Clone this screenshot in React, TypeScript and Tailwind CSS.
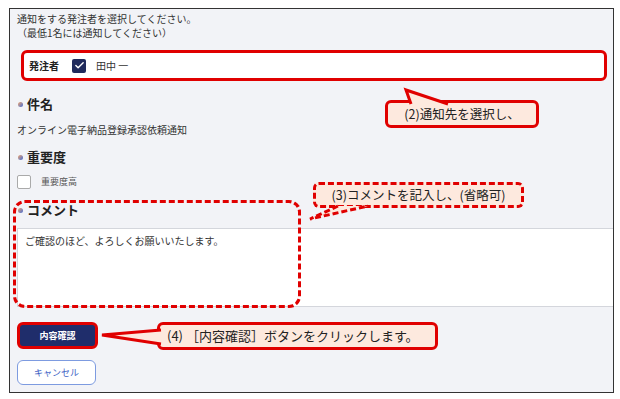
import { Check } from 'lucide-react';

const jp = { fontFamily: '"Noto Sans CJK JP", "Noto Sans", sans-serif' };

function Heading({ label }: { label: string }) {
  return (
    <div className="flex items-center gap-[4px] h-[18px]">
      <span className="ml-[1px] w-[5px] h-[5px] rounded-full bg-gradient-to-br from-[#f0a060] to-[#3f64d0]" />
      <span className="text-[13px] font-bold text-[#222] leading-[18px]">{label}</span>
    </div>
  );
}

export default function App() {
  return (
    <div className="relative w-[620px] h-[399px] bg-white overflow-hidden" style={jp}>
      <div className="ml-[9px] mt-[8px] w-[605px] h-[385px] border border-[#333] bg-[#f2f3f7] flex flex-col pl-[7px] text-[#333]">
        <div className="pt-[3px] text-[10px] leading-[14px]">
          <p>通知をする発注者を選択してください。</p>
          <p>（最低1名には通知してください）</p>
        </div>

        <div className="mt-[10px] ml-[4px] w-[586px] h-[31px] rounded-md border-[3px] border-[#e00000] bg-white flex items-center pl-[5px]">
          <span className="text-[10px] font-bold text-[#222]">発注者</span>
          <span className="ml-[13px] w-[14px] h-[14px] rounded-[2px] bg-[#1f2a5c] flex items-center justify-center">
            <Check className="w-[11px] h-[11px] text-white" strokeWidth={3} />
          </span>
          <span className="ml-[10px] text-[10px] text-[#333]">田中 一</span>
        </div>

        <div className="mt-[14px]">
          <Heading label="件名" />
        </div>
        <p className="mt-[10px] text-[10px] leading-[14px]">オンライン電子納品登録承認依頼通知</p>

        <div className="mt-[11px]">
          <Heading label="重要度" />
        </div>
        <div className="mt-[9px] flex items-center h-[14px]">
          <span className="w-[14px] h-[14px] rounded-[2px] border border-[#aaa] bg-white" />
          <span className="ml-[10px] text-[9px] text-[#555]">重要度高</span>
        </div>

        <div className="mt-[12px]">
          <Heading label="コメント" />
        </div>
        <div className="mt-[9px] h-[79px] bg-white border-t border-b border-l border-[#d4d6dc] pl-[7px] pt-[5px] text-[10px] leading-[14px] text-[#333]">
          ご確認のほど、よろしくお願いいたします。
        </div>

        <button className="mt-[15px] w-[81px] h-[27px] rounded-md border-[3px] border-[#e00000] bg-[#1f2d6b] text-white text-[9px] font-bold">
          内容確認
        </button>
        <button className="mt-[11px] w-[79px] h-[25px] rounded-md border border-[#7d9be0] bg-white text-[#3c5fc4] text-[9px]">
          キャンセル
        </button>
      </div>

      {/* dashed frame around comment */}
      <div className="absolute left-[13px] top-[200px] w-[288px] h-[108px] rounded-xl border-[3px] border-dashed border-[#e00000]" />

      {/* callout 2 */}
      <div className="absolute left-[385px] top-[100px] w-[154px] h-[28px] rounded-md border-[3px] border-[#e00000] bg-[#fde9de] flex items-center justify-center text-[12.5px] text-[#222]">
        (2)通知先を選択し、
      </div>
      <svg className="absolute left-0 top-0" width="620" height="399">
        <path d="M411 104 L406 90 L448 104" fill="#fde9de" stroke="#e00000" strokeWidth="3" strokeLinejoin="miter" />
      </svg>

      {/* callout 3 */}
      <div className="absolute left-[313px] top-[182px] w-[211px] h-[26px] rounded-md border-[3px] border-dashed border-[#e00000] bg-[#fde9de] flex items-center justify-center text-[12.5px] text-[#222]">
        (3)コメントを記入し、(省略可)
      </div>
      <svg className="absolute left-0 top-0" width="620" height="399">
        <path d="M338 206 L310 219 L368 206" fill="#fde9de" stroke="#e00000" strokeWidth="3" strokeDasharray="6 3" />
      </svg>

      {/* callout 4 */}
      <div className="absolute left-[157px] top-[322px] w-[281px] h-[28px] rounded-md border-[3px] border-[#e00000] bg-[#fde9de] flex items-center pl-[7px] text-[13px] text-[#222]">
        (4) ［内容確認］ボタンをクリックします。
      </div>
      <svg className="absolute left-0 top-0" width="620" height="399">
        <path d="M161 330 L102 335 L161 344" fill="#fde9de" stroke="#e00000" strokeWidth="3" />
      </svg>
    </div>
  );
}
